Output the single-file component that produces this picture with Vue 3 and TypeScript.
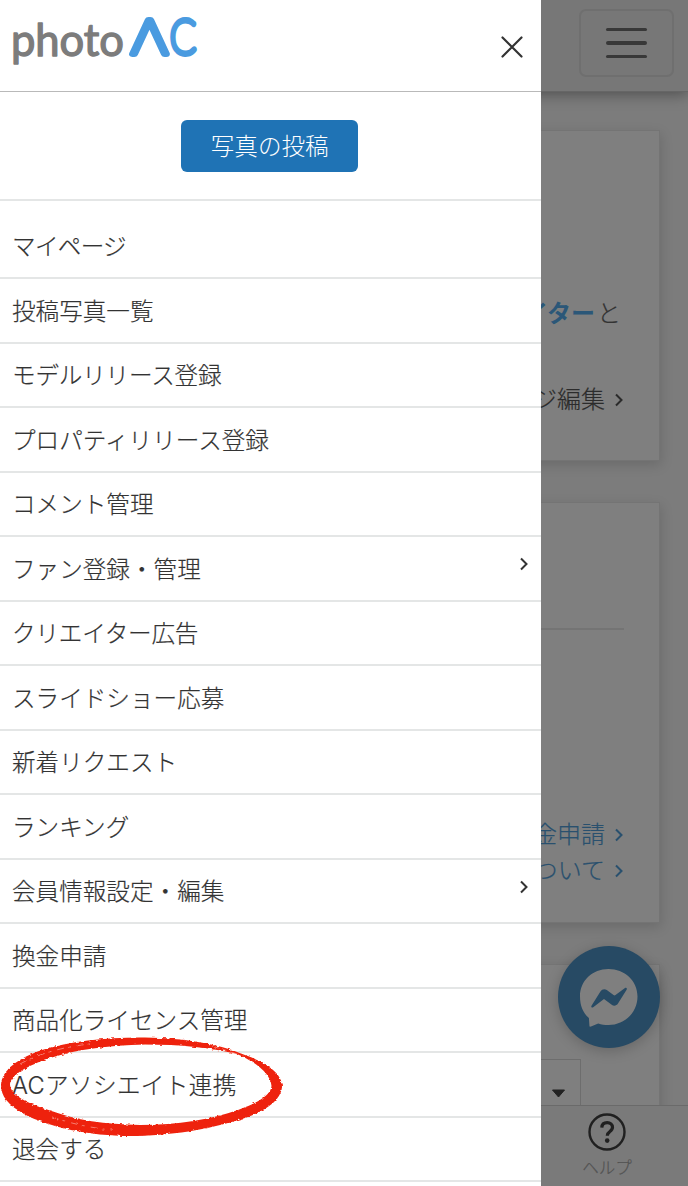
<script setup lang="ts">
interface MenuItem {
  label: string
  expandable?: boolean
  spacing?: 'tight' | 'snug' | 'wide'
}

const items: MenuItem[] = [
  { label: 'マイページ', spacing: 'tight' },
  { label: '投稿写真一覧' },
  { label: 'モデルリリース登録', spacing: 'snug' },
  { label: 'プロパティリリース登録' },
  { label: 'コメント管理' },
  { label: 'ファン登録・管理', expandable: true },
  { label: 'クリエイター広告', spacing: 'snug' },
  { label: 'スライドショー応募' },
  { label: '新着リクエスト' },
  { label: 'ランキング' },
  { label: '会員情報設定・編集', expandable: true },
  { label: '換金申請' },
  { label: '商品化ライセンス管理' },
  { label: 'ACアソシエイト連携', spacing: 'wide' },
  { label: '退会する' },
]
</script>

<template>
  <div class="screen">
    <div class="page">
      <header class="topbar">
        <button class="burger" aria-label="menu"><i></i><i></i><i></i></button>
      </header>
      <section class="card profile">
        <p class="creator"><b>クリエイター</b><span>と</span></p>
        <p class="edit">
          <span>マイページ編集</span>
          <svg class="chev" viewBox="0 0 10 14"><path d="M2 1.5 7.5 7 2 12.5" /></svg>
        </p>
      </section>
      <section class="card points">
        <hr />
        <p class="link">
          <span>換金申請</span>
          <svg class="chev" viewBox="0 0 10 14"><path d="M2 1.5 7.5 7 2 12.5" /></svg>
        </p>
        <p class="link">
          <span>ついて</span>
          <svg class="chev" viewBox="0 0 10 14"><path d="M2 1.5 7.5 7 2 12.5" /></svg>
        </p>
      </section>
      <section class="card stats">
        <div class="select"><svg viewBox="0 0 14 9"><path d="M1 1h12L7 8z" /></svg></div>
      </section>
    </div>

    <nav class="bottombar">
      <div class="help">
        <svg viewBox="0 0 38 38">
          <circle cx="19" cy="19" r="17.5" />
          <path d="M13.800 14.600c.2-3.200 2.400-4.900 5.400-4.900 3.100 0 5.300 1.800 5.300 4.600 0 2.200-1.200 3.300-2.900 4.500-1.700 1.100-2.300 2-2.300 4" />
          <circle class="dot" cx="19.200" cy="27.600" r="2.300" />
        </svg>
        <span>ヘルプ</span>
      </div>
    </nav>

    <div class="messenger">
      <svg viewBox="0 0 102 102">
        <path class="bubble" d="M50.5 23C66.500 23 79.500 34.500 79.500 50.500S66.500 79 50.500 79c-3.800 0-7.200-.5-10.300-1.600L33 80.600c-1 .4-1.600-.1-1.600-1.100l-.5-7.500C25 66.900 22 59.500 22 50.500 22 34.500 34.500 23 50.500 23z" />
        <path class="bolt" d="M33.500 59.800 42.600 45.300C44 43 46.700 42.500 48.800 44.100L55.500 49.100C56.200 49.600 56.900 49.600 57.500 49.100L67 42.100C68.300 41.300 69.400 42.400 68.600 43.700L60 57.500C58.500 59.800 55.800 60.300 53.700 58.700L47 53.700C46.300 53.200 45.600 53.200 45 53.700L35.200 61.300C34 62.100 32.700 61.100 33.500 59.800z" />
      </svg>
    </div>

    <aside class="drawer">
      <div class="drawer-head">
        <svg class="logo" viewBox="0 0 240 80">
          <text class="word" transform="translate(0 55.500) scale(1 1.060)" x="11" y="0" textLength="113" lengthAdjust="spacingAndGlyphs">photo</text>
          <text class="mark" x="131" y="53.500" textLength="37" lengthAdjust="spacingAndGlyphs">Λ</text>
          <text class="mark round" x="170" y="53.800" textLength="26" lengthAdjust="spacingAndGlyphs">C</text>
        </svg>
        <svg class="close" viewBox="0 0 22 22"><path d="M1.500 1.500 20.500 20.500M20.500 1.500 1.500 20.500" /></svg>
      </div>
      <div class="action"><button class="post">写真の投稿</button></div>
      <ul class="menu">
        <li v-for="item in items" :key="item.label">
          <span :class="item.spacing">{{ item.label }}</span>
          <svg v-if="item.expandable" class="chev" viewBox="0 0 10 14"><path d="M2 1.500 7.500 7 2 12.500" /></svg>
        </li>
      </ul>
    </aside>

    <svg class="ring" viewBox="0 0 290 110">
      <defs>
        <filter id="rough" x="-5%" y="-5%" width="110%" height="110%">
          <feTurbulence type="fractalNoise" baseFrequency="0.25 0.6" numOctaves="2" seed="4" result="n" />
          <feDisplacementMap in="SourceGraphic" in2="n" scale="3" xChannelSelector="R" yChannelSelector="G" />
        </filter>
      </defs>
      <g filter="url(#rough)">
        <path
          class="paint"
          fill-rule="evenodd"
          d="M1 55C2 40 18 28 42 20C70 11 110 7 145 7.500C185 8 218 14 241 23.500C266 32 282 43 282 56C282 70 264 83 238 90C210 99 170 106 130 106C90 106 48 97 24 84C8 75 1 66 1 55Z
             M10 55C11 65 26 73 50 80.500C76 90 105 94.500 140 95C178 95 212 89 238 80C258 73 271 65 271.500 56C271 45 258 33 238 24.500C212 17.500 180 14.500 145 14.500C108 15 75 20 50 28C27 36 10 45 10 55Z"
        />
        <path class="scratch" d="M20 34C38 24 62 17 90 14M52 87C72 94 92 98 112 100M212 16 240 25" />
      </g>
    </svg>
  </div>
</template>

<style>
body {
  background: #7c7c7c;
}
</style>

<style scoped>
.screen {
  position: relative;
  width: 688px;
  height: 1186px;
  overflow: hidden;
  background: #7c7c7c;
  font-family: "Liberation Sans", "Noto Sans CJK JP", sans-serif;
  font-weight: 300;
  color: #333;
  -webkit-text-stroke: 0.200px currentColor;
}
.screen * {
  box-sizing: border-box;
}
p,
ul {
  margin: 0;
  padding: 0;
}
button {
  font: inherit;
  padding: 0;
}
.page {
  display: flex;
  flex-direction: column;
}
.topbar {
  height: 92px;
  flex: none;
  display: flex;
  justify-content: flex-end;
  padding: 9px 14px 0 0;
  background: #777;
  border-bottom: 1px solid #666;
  box-shadow: 0 2px 14px rgba(0, 0, 0, 0.38);
}
.burger {
  width: 95px;
  height: 68px;
  border: 2px solid #6f6f6f;
  border-radius: 7px;
  background: none;
  display: flex;
  flex-direction: column;
  align-items: center;
  justify-content: center;
  gap: 10.500px;
}
.burger i {
  width: 41px;
  height: 3.200px;
  border-radius: 2px;
  background: #383838;
}
.card {
  width: 640px;
  margin-left: 20px;
  flex: none;
  background: #7f7f7f;
  border: 1px solid #747474;
  box-shadow: 1px 4px 12px rgba(0, 0, 0, 0.14);
  padding-right: 35px;
  font-size: 24px;
}
.card p {
  display: flex;
  justify-content: flex-end;
  align-items: center;
  height: 36px;
  line-height: 36px;
}
.profile {
  height: 331px;
  margin-top: 38px;
  padding-top: 165px;
}
.creator b {
  color: #2b5778;
  font-weight: 700;
  -webkit-text-stroke: 0;
}
.card .creator {
  padding-right: 3px;
}
.creator span {
  margin-left: 2px;
}
.edit {
  margin-top: 50px;
  color: #2b2b2b;
}
.chev {
  width: 10px;
  height: 14px;
  flex: none;
  fill: none;
  stroke: currentColor;
  stroke-width: 2;
}
.card .chev {
  margin-left: 9px;
}
.points {
  height: 421px;
  margin-top: 41px;
}
.points hr {
  margin: 125px 0 186.500px;
  border: 0;
  border-top: 2px solid #747474;
}
.link {
  color: #29506e;
}
.stats {
  height: 220px;
  margin-top: 41px;
}
.select {
  width: 500px;
  height: 60px;
  margin: 94px 0 0 60px;
  border: 1px solid #6d6d6d;
  display: flex;
  justify-content: flex-end;
  padding: 29px 14px 0 0;
}
.select svg {
  width: 15px;
  height: 9px;
  fill: #222;
  stroke: #222;
  stroke-linejoin: round;
}
.bottombar {
  position: absolute;
  left: 0;
  right: 0;
  bottom: 0;
  height: 81px;
  background: #7a7a7a;
  border-top: 1px solid #6a6a6a;
  display: flex;
  justify-content: flex-end;
  padding: 7px 50px 0 0;
}
.help {
  width: 62px;
  display: flex;
  flex-direction: column;
  align-items: center;
  font-size: 16.500px;
  line-height: 24px;
  color: #525252;
  gap: 5px;
}
.help svg {
  width: 38px;
  height: 38px;
  fill: none;
  stroke: #202020;
  stroke-width: 2.400;
}
.help path {
  stroke-width: 3.200;
}
.help .dot {
  fill: #202020;
  stroke: none;
}
.messenger {
  position: absolute;
  left: 558px;
  top: 946px;
  width: 102px;
  height: 102px;
  border-radius: 50%;
  background: #274a64;
  box-shadow: 0 3px 14px rgba(0, 0, 0, 0.2);
}
.messenger svg {
  display: block;
}
.bubble {
  fill: #7f7f7f;
}
.bolt {
  fill: #274a64;
}
.drawer {
  position: absolute;
  left: 0;
  top: 0;
  width: 541.400px;
  height: 1186px;
  background: #fff;
}
.drawer-head {
  height: 92px;
  border-bottom: 1.500px solid #b9b9b9;
  display: flex;
  justify-content: space-between;
}
.logo {
  width: 240px;
  height: 80px;
}
.word {
  font-family: Lato, sans-serif;
  font-weight: 400;
  font-size: 42.500px;
  fill: #7c7c7c;
  stroke: #7c7c7c;
  stroke-width: 1.300;
  stroke-linejoin: round;
}
.mark {
  font-family: Inter, "Noto Sans", sans-serif;
  font-weight: 100;
  font-size: 46px;
  fill: #4a9be0;
  stroke: #4a9be0;
  stroke-width: 6;
  stroke-linejoin: round;
}
.mark.round {
  font-family: Lato, sans-serif;
  font-size: 47.500px;
}
.close {
  width: 22px;
  height: 22px;
  margin: 36px 18px 0 0;
  stroke: #333;
  stroke-width: 2.200;
  stroke-linecap: round;
}
.action {
  height: 109px;
  border-bottom: 2px solid #e4e6e6;
  display: flex;
  justify-content: center;
  padding: 28px 2px 0 0;
}
.post {
  width: 177px;
  height: 52px;
  border: 0;
  border-radius: 6px;
  background: #1f73b5;
  color: #fff;
  font-size: 23.600px;
  line-height: 53px;
  padding-top: 1px;
  -webkit-text-stroke: 0;
}
.menu {
  list-style: none;
  padding-top: 13.700px;
}
.menu li {
  height: 64.500px;
  border-bottom: 2px solid #e4e6e6;
  display: flex;
  align-items: center;
  justify-content: space-between;
  padding: 3px 12.500px 0 12px;
  font-family: Inter, "Noto Sans CJK JP", sans-serif;
  font-size: 23.600px;
  line-height: 36px;
}
.tight {
  letter-spacing: -0.700px;
}
.snug {
  letter-spacing: -0.200px;
}
.wide {
  letter-spacing: 0.350px;
}
.menu .chev {
  margin-top: -11px;
}
.ring {
  position: absolute;
  left: 0;
  top: 1030px;
  width: 290px;
  height: 110px;
}
.paint {
  fill: #ee220c;
}
.scratch {
  fill: none;
  stroke: #fff;
  stroke-width: 0.600;
  stroke-dasharray: 7 4 3 6;
  opacity: 0.700;
}
</style>
